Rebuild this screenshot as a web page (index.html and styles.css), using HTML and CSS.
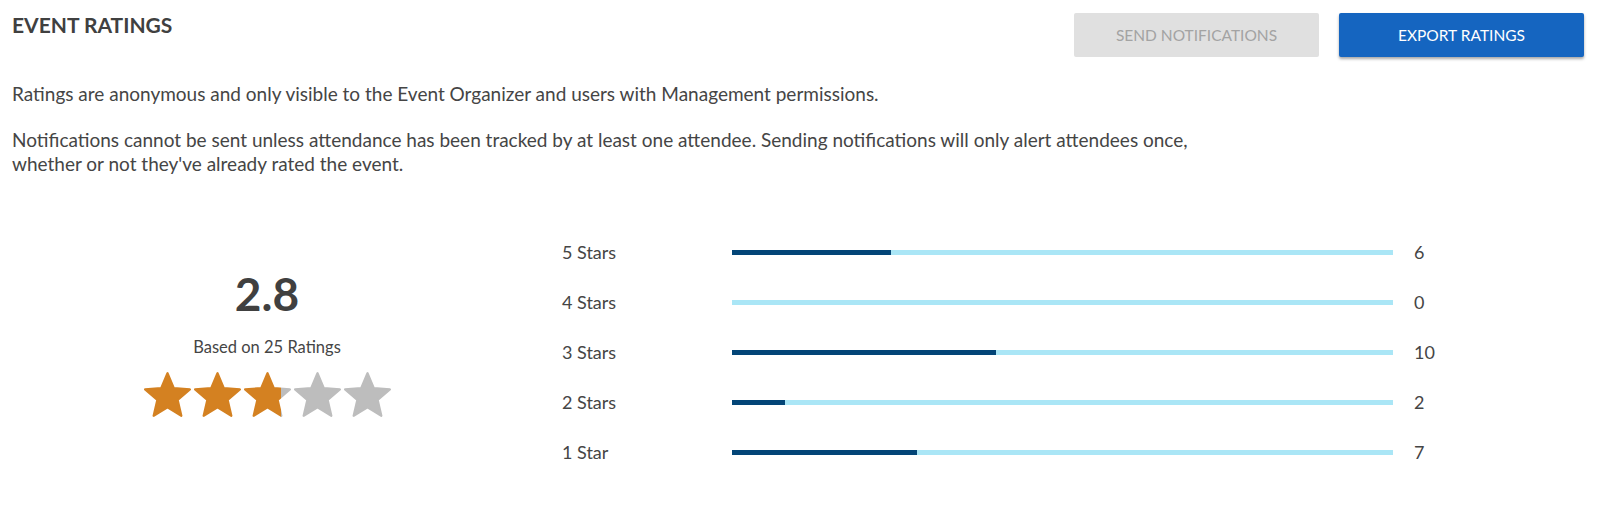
FILE: index.html
```html
<!DOCTYPE html>
<html lang="en">
<head>
    <meta charset="UTF-8">
    <title>Event Ratings</title>
    <link rel="stylesheet" href="styles.css">
</head>
<body>
    <!-- header -->
    <div class="header">
        <h2 class="title">EVENT RATINGS</h2>
        <div class="actions">
            <button class="button disabled" disabled>SEND NOTIFICATIONS</button>
            <button class="button primary">EXPORT RATINGS</button>
        </div>
    </div>

    <p class="note first">Ratings are anonymous and only visible to the Event Organizer and users with Management permissions.</p>
    <p class="note">Notifications cannot be sent unless attendance has been tracked by at least one attendee. Sending notifications will only alert attendees once,<br>whether or not they've already rated the event.</p>

    <div class="ratings">
        <!-- average -->
        <div class="summary">
            <div class="average">2.8</div>
            <div class="based">Based on 25 Ratings</div>
            <div class="stars">
                <svg class="star" viewBox="1.5 1.5 21 20"><path class="on" d="M12 17.27L18.18 21l-1.64-7.03L22 9.24l-7.19-.61L12 2 9.19 8.63 2 9.24l5.46 4.73L5.82 21z"/></svg>
                <svg class="star" viewBox="1.5 1.5 21 20"><path class="on" d="M12 17.27L18.18 21l-1.64-7.03L22 9.24l-7.19-.61L12 2 9.19 8.63 2 9.24l5.46 4.73L5.82 21z"/></svg>
                <svg class="star" viewBox="1.5 1.5 21 20">
                    <defs>
                        <linearGradient id="part" x1="0" x2="1" y1="0" y2="0">
                            <stop offset="0.8" stop-color="#d48121"/>
                            <stop offset="0.8" stop-color="#bdbdbd"/>
                        </linearGradient>
                    </defs>
                    <path fill="url(#part)" stroke="url(#part)" d="M12 17.27L18.18 21l-1.64-7.03L22 9.24l-7.19-.61L12 2 9.19 8.63 2 9.24l5.46 4.73L5.82 21z"/>
                </svg>
                <svg class="star" viewBox="1.5 1.5 21 20"><path class="off" d="M12 17.27L18.18 21l-1.64-7.03L22 9.24l-7.19-.61L12 2 9.19 8.63 2 9.24l5.46 4.73L5.82 21z"/></svg>
                <svg class="star" viewBox="1.5 1.5 21 20"><path class="off" d="M12 17.27L18.18 21l-1.64-7.03L22 9.24l-7.19-.61L12 2 9.19 8.63 2 9.24l5.46 4.73L5.82 21z"/></svg>
            </div>
        </div>

        <!-- breakdown -->
        <div class="breakdown">
            <div class="row">
                <span class="label">5 Stars</span>
                <div class="track"><div class="fill" style="width: 24%"></div></div>
                <span class="count">6</span>
            </div>
            <div class="row">
                <span class="label">4 Stars</span>
                <div class="track"><div class="fill" style="width: 0%"></div></div>
                <span class="count">0</span>
            </div>
            <div class="row">
                <span class="label">3 Stars</span>
                <div class="track"><div class="fill" style="width: 40%"></div></div>
                <span class="count">10</span>
            </div>
            <div class="row">
                <span class="label">2 Stars</span>
                <div class="track"><div class="fill" style="width: 8%"></div></div>
                <span class="count">2</span>
            </div>
            <div class="row">
                <span class="label">1 Star</span>
                <div class="track"><div class="fill" style="width: 28%"></div></div>
                <span class="count">7</span>
            </div>
        </div>
    </div>
</body>
</html>
```

FILE: styles.css
```css
body {
    font-family: Lato, "Open Sans", sans-serif;
    color: #454545;
    background-color: #fff;
    margin: 0;
    padding: 0 20px 0 12px;
}

.header {
    display: flex;
    justify-content: space-between;
    align-items: flex-start;
    padding-top: 13px;
}

.title {
    margin: 0;
    font-size: 21px;
    line-height: 24px;
    font-weight: 700;
    color: #404040;
}

.actions {
    display: flex;
    gap: 20px;
}

.button {
    width: 245px;
    height: 44px;
    font-family: inherit;
    font-size: 15.5px;
    border: none;
    border-radius: 2px;
    cursor: pointer;
}

.disabled {
    background-color: #e0e0e0;
    color: #a3a3a3;
    cursor: default;
}

.primary {
    background-color: #1565c0;
    color: #fff;
    box-shadow: 0 2px 3px rgba(0, 0, 0, 0.35);
}

.note {
    font-size: 19px;
    line-height: 24px;
    margin: 0;
}

.note.first {
    margin: 25px 0 22px;
}

/* 评分区域 */
.ratings {
    display: flex;
    align-items: center;
    margin-top: 51px;
}

.summary {
    width: 510px;
    display: flex;
    flex-direction: column;
    align-items: center;
    margin-bottom: 19px;
}

.average {
    font-size: 46px;
    font-weight: 700;
    line-height: 52px;
    color: #404040;
}

.based {
    font-size: 16.5px;
    margin-top: 17px;
}

.stars {
    display: flex;
    gap: 3px;
    margin-top: 15px;
}

.star {
    width: 47px;
    height: 45px;
}

.star path {
    stroke-width: 1;
    stroke-linejoin: round;
}

.on {
    fill: #d48121;
    stroke: #d48121;
}

.off {
    fill: #bdbdbd;
    stroke: #bdbdbd;
}

.breakdown {
    margin-left: 40px;
}

.row {
    display: grid;
    grid-template-columns: 149px 661px auto;
    column-gap: 21px;
    align-items: center;
    height: 50px;
}

.label,
.count {
    font-size: 18px;
}

.track {
    height: 5px;
    background-color: #aae6f6;
}

.fill {
    height: 100%;
    background-color: #034577;
}
```
